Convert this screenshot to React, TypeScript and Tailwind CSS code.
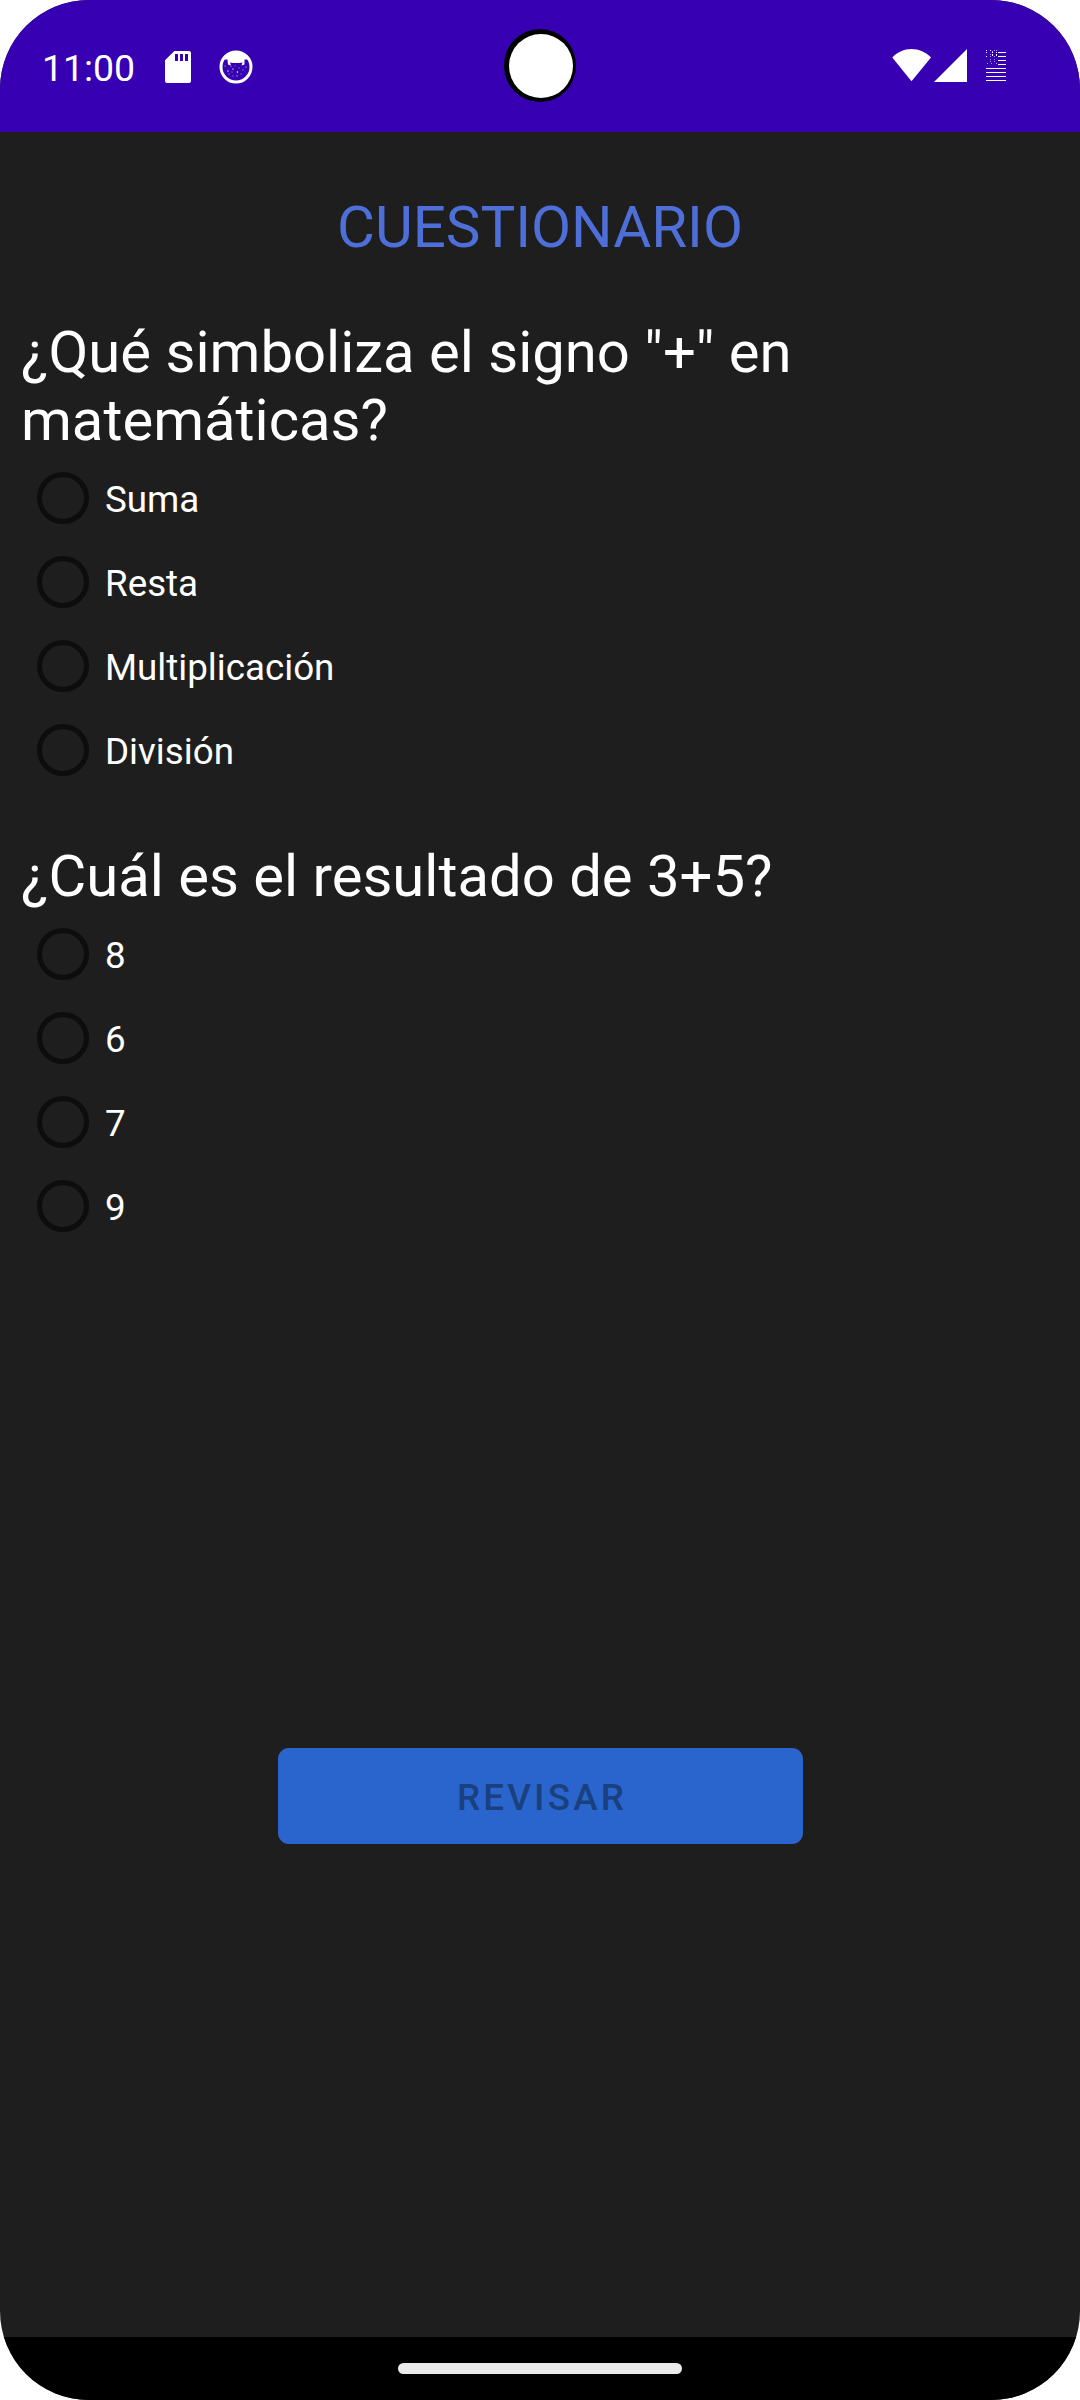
import React from "react";

function SdCardIcon() {
  return (
    <svg className="block" width="26" height="32" viewBox="0 0 26 32" fill="none">
      <path
        fillRule="evenodd"
        fill="#fff"
        d="M9.3 0H24a2 2 0 0 1 2 2v28a2 2 0 0 1-2 2H2a2 2 0 0 1-2-2V9.3ZM10 3v7h3V3Zm5 0v7h3V3Zm5 0v7h3V3Z"
      />
    </svg>
  );
}

const SPECKS: [number, number, number][] = [
  [6, 16, 0.4], [9, 21, 0.9], [12, 16.5, 0.4], [14, 19, 0.8], [10, 24, 0.4],
  [16, 16, 0.3], [18.5, 22, 1], [20, 18, 0.4], [24, 20, 0.4], [22, 24, 0.4],
  [18, 26, 0.6], [14, 26, 0.4], [27, 17, 0.5], [13, 22, 0.4],
];

function FaceIcon() {
  return (
    <svg className="block" width="34" height="34" viewBox="0 0 34 34">
      <circle cx="17" cy="17" r="15" fill="none" stroke="#fff" strokeWidth="3" />
      <path
        fill="#fff"
        d="M2.500 13C4.500 5 10 1.500 17 1.500S29.500 5 31.500 13L28.500 9.500 25.500 9.500 25.500 14.500 22.500 15.500 23.500 12.500Q17 13.500 11 12.500L12 15.500 9 14.500 8.500 9.500 5.500 9.500Z"
      />
      {SPECKS.map(([x, y, o]) => (
        <circle key={`${x}-${y}`} cx={x} cy={y} r="0.75" fill="#fff" opacity={o} />
      ))}
    </svg>
  );
}

function WifiIcon() {
  return (
    <svg className="block" width="40" height="34" viewBox="0 0 40 34">
      <path fill="#fff" d="M0.300 9.500C5.500 4 12 1 19.500 1S33.500 4 39 9.500L19.500 33.300Z" />
    </svg>
  );
}

function SignalIcon() {
  return (
    <svg className="block" width="33" height="33" viewBox="0 0 33 33">
      <path fill="#fff" d="M33 0V33H0Z" />
    </svg>
  );
}

const DOTS: [number, number, number][] = [
  [0, 0, 1], [4, 0, 1], [6, 1, 0.6], [8, 0, 0.6], [10, 0, 0.6], [0, 2, 1],
  [6, 2, 1], [10, 2, 1], [4, 4, 0.6], [6, 4, 1], [6, 5, 1], [10, 4, 1],
  [10, 5, 1], [0, 6, 1], [4, 6, 0.6], [8, 6, 0.6], [4, 9, 0.5], [8, 9, 0.5],
  [4, 11, 0.6], [8, 11, 0.6], [1, 13, 0.6], [5, 13, 0.6], [10, 13, 0.6],
];

function BatteryIcon() {
  return (
    <svg className="block" width="20" height="31" viewBox="0 0 20 31" fill="#fff" shapeRendering="crispEdges">
      {DOTS.map(([x, y, o]) => (
        <rect key={`${x}-${y}`} x={x} y={y} width="1" height="1" opacity={o} />
      ))}
      {[2, 6, 10, 14].map((y) => (
        <rect key={y} x="12" y={y} width="8" height="1" />
      ))}
      {[18, 22, 26, 30].map((y) => (
        <rect key={y} x="0" y={y} width="20" height="1" />
      ))}
    </svg>
  );
}

function StatusBar() {
  return (
    <header className="relative flex h-[132px] items-start bg-[#3700b3] text-white">
      <span className="ml-[42px] mt-[47px] w-[95px] text-[37.400px] leading-[42px]">11:00</span>
      <div className="ml-[28px] mt-[51px]">
        <SdCardIcon />
      </div>
      <div className="ml-[28px] mt-[50px]">
        <FaceIcon />
      </div>
      <div className="ml-auto mt-[48px]">
        <WifiIcon />
      </div>
      <div className="ml-[2px] mt-[49px]">
        <SignalIcon />
      </div>
      <div className="ml-[19px] mr-[74px] mt-[50px]">
        <BatteryIcon />
      </div>
      <div className="absolute left-[503.500px] top-[29px] h-[73px] w-[72.500px] rounded-full bg-black pl-[5px] pt-[4.500px]">
        <div className="size-[64px] rounded-full bg-white" />
      </div>
    </header>
  );
}

function Option({ name, label }: { name: string; label: string }) {
  return (
    <label className="flex h-[84px] items-center pl-[37px]">
      <input
        type="radio"
        name={name}
        className="size-[52px] shrink-0 appearance-none rounded-full border-[5px] border-[#0d0d0d]"
      />
      <span className="ml-[16px] mt-[4px] text-[36.750px] leading-[44px]">{label}</span>
    </label>
  );
}

function Question({ name, title, options }: { name: string; title: string; options: string[] }) {
  return (
    <section>
      <h2 className="mb-[2px] w-[900px] pl-[21px] text-[58px] leading-[68px]">{title}</h2>
      <div>
        {options.map((o) => (
          <Option key={o} name={name} label={o} />
        ))}
      </div>
    </section>
  );
}

export default function App() {
  return (
    <div className="h-[2400px] w-[1080px] bg-white">
      <div className="flex h-full flex-col overflow-hidden rounded-[89px] bg-[#1e1e1e] font-['Roboto',sans-serif] text-white">
        <StatusBar />
        <main className="flex flex-1 flex-col">
          <h1 className="mt-[61px] text-center text-[58.250px] leading-[68px] text-[#4e6fd8]">CUESTIONARIO</h1>
          <div className="mt-[57px]">
            <Question
              name="q1"
              title={'¿Qué simboliza el signo "+" en matemáticas?'}
              options={["Suma", "Resta", "Multiplicación", "División"]}
            />
          </div>
          <div className="mt-[50px]">
            <Question name="q2" title="¿Cuál es el resultado de 3+5?" options={["8", "6", "7", "9"]} />
          </div>
          <button className="ml-[278px] mt-[500px] h-[96px] w-[525px] rounded-[11px] bg-[#2a65cd] pl-[3px] pt-[4px] text-[36.750px] font-medium leading-[44px] tracking-[3.200px] text-[#1a4080]">
            REVISAR
          </button>
        </main>
        <footer className="flex h-[63px] justify-center bg-black pt-[26px]">
          <div className="h-[11px] w-[284px] rounded-full bg-[#ebebeb]" />
        </footer>
      </div>
    </div>
  );
}
